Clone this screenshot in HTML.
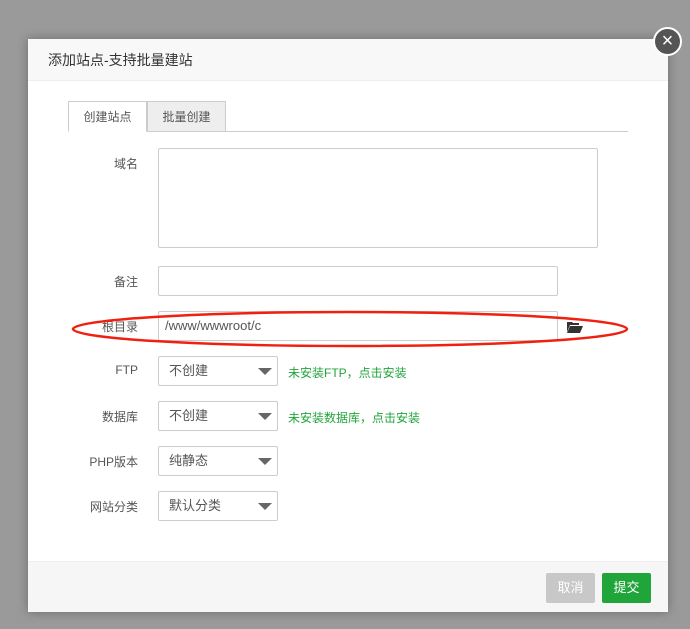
<!DOCTYPE html>
<html><head><meta charset="utf-8"><style>
*{box-sizing:border-box;margin:0;padding:0}
body{width:690px;height:629px;background:#9a9a9a;font-family:"Liberation Sans","Noto Sans CJK SC",sans-serif;font-size:12px;color:#555;position:relative;overflow:hidden}
.dlg{position:absolute;left:28px;top:39px;width:640px;height:573px;background:#fff;box-shadow:0 0 10px rgba(0,0,0,.3)}
.hd{height:42px;background:#f8f8f8;border-bottom:1px solid #eee;padding-left:20px;line-height:42px;font-size:14px;color:#333}
.close{position:absolute;left:653px;top:27px;width:29px;height:29px;border-radius:50%;background:#555;border:2px solid #fff;color:#fff;text-align:center;line-height:24px;font-size:20px}
.tabs{position:absolute;left:40px;top:62px;width:560px;height:31px;border-bottom:1px solid #ccc}
.tab{position:absolute;top:0;height:31px;width:79px;border:1px solid #ccc;text-align:center;line-height:30px;color:#555}
.lbl{position:absolute;width:110px;text-align:right;left:0;color:#555}
.inp{position:absolute;left:130px;border:1px solid #ccc;border-radius:2px;background:#fff}
.sel{position:absolute;left:130px;width:120px;height:30px;border:1px solid #ccc;border-radius:2px;line-height:28px;padding-left:10px;color:#555;font-size:13px}
.sel:after{content:"";position:absolute;right:5px;top:11px;border-left:7px solid transparent;border-right:7px solid transparent;border-top:7px solid #666}
.g{position:absolute;left:260px;color:#20a53a}
.ft{position:absolute;left:0;bottom:0;width:640px;height:51px;background:#f5f6f5;border-top:1px solid #eee}
.btn{position:absolute;top:11px;height:30px;width:49px;border-radius:2px;color:#fff;text-align:center;line-height:30px;font-size:13px}
</style></head><body>
<div class="dlg">
<div class="hd">添加站点-支持批量建站</div>
<div class="tabs">
<div class="tab" style="left:0;background:#fff;border-bottom-color:#fff">创建站点</div>
<div class="tab" style="left:79px;background:#eee">批量创建</div>
</div>
<div class="lbl" style="top:116px">域名</div>
<div class="inp" style="top:109px;width:440px;height:100px"></div>
<div class="lbl" style="top:234px">备注</div>
<div class="inp" style="top:227px;width:400px;height:30px"></div>
<div class="lbl" style="top:279px">根目录</div>
<div class="inp" style="top:272px;width:400px;height:30px;line-height:28px;padding-left:6px;color:#555;font-size:13px">/www/wwwroot/c</div>
<svg style="position:absolute;left:539px;top:282px" width="16" height="12" viewBox="0 0 16 12"><path d="M0 1h5l1 1h6v2H3L0 11z M3 5h13l-3 7H0z" fill="#333"/></svg>
<div class="lbl" style="top:324px">FTP</div>
<div class="sel" style="top:317px">不创建</div>
<div class="g" style="top:325px">未安装FTP，点击安装</div>
<div class="lbl" style="top:369px">数据库</div>
<div class="sel" style="top:362px">不创建</div>
<div class="g" style="top:370px">未安装数据库，点击安装</div>
<div class="lbl" style="top:414px">PHP版本</div>
<div class="sel" style="top:407px">纯静态</div>
<div class="lbl" style="top:459px">网站分类</div>
<div class="sel" style="top:452px">默认分类</div>
<div class="ft">
<div class="btn" style="left:518px;background:#c8c8c8">取消</div>
<div class="btn" style="left:574px;background:#20a53a">提交</div>
</div>
</div>
<div class="close">×</div>
<svg style="position:absolute;left:0;top:0" width="690" height="629"><ellipse cx="350" cy="329" rx="277" ry="17" fill="none" stroke="#f02010" stroke-width="2.5"/></svg>
</body></html>
